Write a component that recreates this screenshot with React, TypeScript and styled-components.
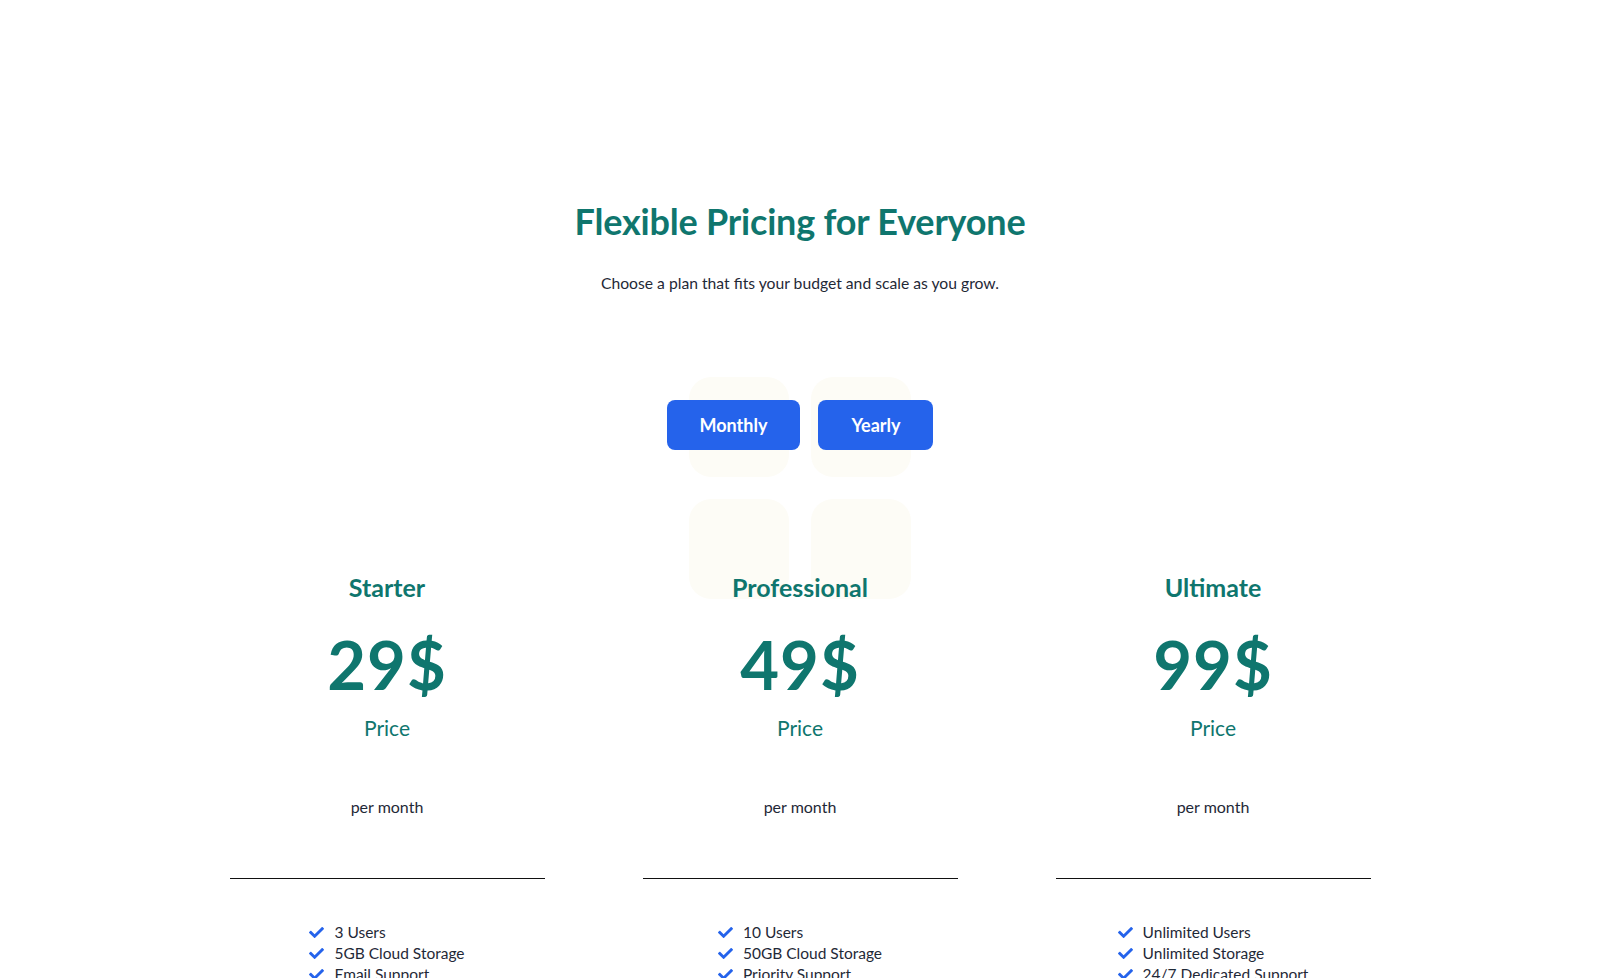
import styled, { createGlobalStyle } from "styled-components";
import { useState } from "react";
import { FaCheck } from "react-icons/fa";

type Plan = {
  name: string;
  price: string;
  features: string[];
};

const plans: Plan[] = [
  {
    name: "Starter",
    price: "29$",
    features: ["3 Users", "5GB Cloud Storage", "Email Support"]
  },
  {
    name: "Professional",
    price: "49$",
    features: ["10 Users", "50GB Cloud Storage", "Priority Support"]
  },
  {
    name: "Ultimate",
    price: "99$",
    features: ["Unlimited Users", "Unlimited Storage", "24/7 Dedicated Support"]
  }
];

const GlobalStyle = createGlobalStyle`
  * {
    box-sizing: border-box;
  }
  body {
    margin: 0;
    background: #fff;
    font-family: "Lato", "Noto Sans", sans-serif;
    color: #1f2937;
  }
`;

const PlanCard = (props: { plan: Plan }) => {
  const { plan } = props;
  return (
    <Card>
      <div className="card-name">{plan.name}</div>
      <div className="card-price">{plan.price}</div>
      <div className="card-label">Price</div>
      <div className="card-period">per month</div>
      <Divider />
      <FeatureList>
        {plan.features.map((f) => (
          <li key={f}>
            <FaCheck />
            <span>{f}</span>
          </li>
        ))}
      </FeatureList>
    </Card>
  );
};

export default function App() {
  const [billing, setBilling] = useState("monthly");

  return (
    <>
      <GlobalStyle />
      <Page>
        <Title>Flexible Pricing for Everyone</Title>
        <Subtitle>Choose a plan that fits your budget and scale as you grow.</Subtitle>
        <ToggleArea>
          <Tiles>
            <span />
            <span />
            <span />
            <span />
          </Tiles>
          <ToggleButton
            $active={billing === "monthly"}
            onClick={() => setBilling("monthly")}
          >
            Monthly
          </ToggleButton>
          <ToggleButton
            $active={billing === "yearly"}
            onClick={() => setBilling("yearly")}
          >
            Yearly
          </ToggleButton>
        </ToggleArea>
        <Cards>
          {plans.map((p) => (
            <PlanCard key={p.name} plan={p} />
          ))}
        </Cards>
      </Page>
    </>
  );
}

const Page = styled.main`
  display: flex;
  flex-direction: column;
  align-items: center;
  padding-top: 199px;
  min-height: 978px;
  overflow: hidden;
`;

const Title = styled.h1`
  margin: 0;
  font-size: 36px;
  line-height: 44px;
  font-weight: 700;
  color: #0f766e;
  letter-spacing: -0.2px;
`;

const Subtitle = styled.p`
  margin: 28px 0 0;
  font-size: 15.7px;
  line-height: 24px;
  color: #1f2937;
`;

const ToggleArea = styled.div`
  position: relative;
  display: flex;
  gap: 18px;
  margin-top: 105px;
`;

const Tiles = styled.div`
  position: absolute;
  top: -23px;
  left: 50%;
  transform: translateX(-50%);
  display: grid;
  grid-template-columns: repeat(2, 100px);
  grid-auto-rows: 100px;
  gap: 22px;
  z-index: 0;
  pointer-events: none;

  span {
    background: #fdfcf6;
    border-radius: 22px;
  }
`;

const ToggleButton = styled.button<{ $active: boolean }>`
  position: relative;
  z-index: 1;
  height: 50px;
  padding: 0 33px;
  border: none;
  border-radius: 8px;
  background: ${(p) => (p.$active ? "#2563eb" : "#2563eb")};
  color: #fff;
  font-family: inherit;
  font-size: 18px;
  font-weight: 700;
  cursor: pointer;
`;

const Cards = styled.section`
  position: relative;
  z-index: 1;
  display: grid;
  grid-template-columns: repeat(3, 315px);
  column-gap: 98px;
  margin-top: 122px;
`;

const Card = styled.div`
  display: flex;
  flex-direction: column;
  align-items: center;

  .card-name {
    font-size: 25px;
    line-height: 30px;
    font-weight: 700;
    color: #0f766e;
  }

  .card-price {
    margin-top: 23px;
    font-size: 67px;
    line-height: 78px;
    font-weight: 700;
    color: #0f766e;
    letter-spacing: 1px;
  }

  .card-label {
    margin-top: 11px;
    font-size: 21px;
    line-height: 28px;
    color: #0f766e;
  }

  .card-period {
    margin-top: 53px;
    font-size: 16px;
    line-height: 24px;
    color: #1f2937;
  }
`;

const Divider = styled.hr`
  width: 100%;
  margin: 59px 0 0;
  border: none;
  border-top: 1.5px solid #111;
`;

const FeatureList = styled.ul`
  list-style: none;
  margin: 43px 0 0;
  padding: 0;

  li {
    display: flex;
    align-items: center;
    gap: 10px;
    font-size: 15.5px;
    line-height: 21px;
    color: #1f2937;
  }

  svg {
    width: 15px;
    height: 15px;
    color: #2563eb;
    flex-shrink: 0;
  }
`;
